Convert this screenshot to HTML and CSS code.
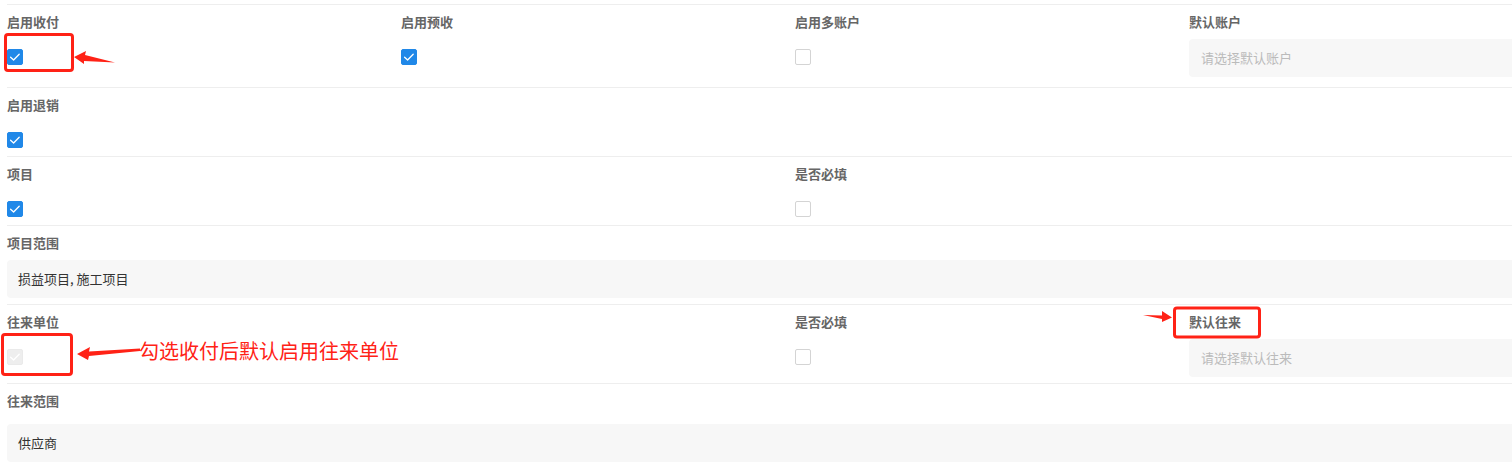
FILE: index.html
```html
<!DOCTYPE html>
<html lang="zh">
<head>
<meta charset="utf-8">
<title>收付设置</title>
<link rel="stylesheet" href="styles.css">
</head>
<body>
<div class="form">
  <div class="row row-tall">
    <div class="item">
      <div class="label">启用收付</div>
      <div class="ctrl"><span class="cb cb-on"><svg class="tick" viewBox="0 0 16 16"><path d="M3.6 8.2 L6.6 11 L12.2 5.2"/></svg></span></div>
    </div>
    <div class="item">
      <div class="label">启用预收</div>
      <div class="ctrl"><span class="cb cb-on"><svg class="tick" viewBox="0 0 16 16"><path d="M3.6 8.2 L6.6 11 L12.2 5.2"/></svg></span></div>
    </div>
    <div class="item">
      <div class="label">启用多账户</div>
      <div class="ctrl"><span class="cb"></span></div>
    </div>
    <div class="item">
      <div class="label">默认账户</div>
      <div class="ctrl"><div class="input placeholder">请选择默认账户</div></div>
    </div>
  </div>

  <div class="row row-cb">
    <div class="item">
      <div class="label">启用退销</div>
      <div class="ctrl"><span class="cb cb-on"><svg class="tick" viewBox="0 0 16 16"><path d="M3.6 8.2 L6.6 11 L12.2 5.2"/></svg></span></div>
    </div>
  </div>

  <div class="row row-cb">
    <div class="item">
      <div class="label">项目</div>
      <div class="ctrl"><span class="cb cb-on"><svg class="tick" viewBox="0 0 16 16"><path d="M3.6 8.2 L6.6 11 L12.2 5.2"/></svg></span></div>
    </div>
    <div class="item"></div>
    <div class="item">
      <div class="label">是否必填</div>
      <div class="ctrl"><span class="cb"></span></div>
    </div>
  </div>

  <div class="row row-wide">
    <div class="item item-full">
      <div class="label">项目范围</div>
      <div class="ctrl"><div class="input value">损益项目, 施工项目</div></div>
    </div>
  </div>

  <div class="row row-wide">
    <div class="item">
      <div class="label">往来单位</div>
      <div class="ctrl"><span class="cb cb-disabled"><svg class="tick" viewBox="0 0 16 16"><path d="M3.6 8.2 L6.6 11 L12.2 5.2"/></svg></span></div>
    </div>
    <div class="item"></div>
    <div class="item">
      <div class="label">是否必填</div>
      <div class="ctrl"><span class="cb"></span></div>
    </div>
    <div class="item">
      <div class="label">默认往来</div>
      <div class="ctrl"><div class="input placeholder">请选择默认往来</div></div>
    </div>
  </div>

  <div class="row">
    <div class="item item-full">
      <div class="label">往来范围</div>
      <div class="ctrl ctrl-low"><div class="input value">供应商</div></div>
    </div>
  </div>
</div>

<svg class="annot" viewBox="0 0 1512 469" width="1512" height="469">
  <rect x="5.5" y="34.5" width="67" height="36" rx="2.5" ry="2.5" fill="none" stroke="#ff2216" stroke-width="3"/>
  <polygon points="74,57 86,51 85,55 115,62.5 84,61 84,64" fill="#ff2216"/>
  <rect x="2.5" y="334.5" width="69" height="40" rx="2.5" ry="2.5" fill="none" stroke="#ff2216" stroke-width="3"/>
  <polygon points="77,354 90,347 89,351.5 140,348.5 140,351 89,356 88,360" fill="#ff2216"/>
  <rect x="1174.5" y="308" width="85" height="29" rx="2.5" ry="2.5" fill="none" stroke="#ff2216" stroke-width="3"/>
  <polygon points="1143,315 1162,315.5 1162,311 1172,317.5 1162,322 1162,319" fill="#ff2216"/>
</svg>
<div class="note">勾选收付后默认启用往来单位</div>
</body>
</html>
```

FILE: styles.css
```css
html, body {
  margin: 0;
  padding: 0;
  overflow: hidden;
  background: #ffffff;
}

body {
  width: 1512px;
  height: 469px;
  position: relative;
  font-family: "Noto Sans CJK SC", "Noto Sans", sans-serif;
  font-size: 13px;
}

.form {
  padding-top: 4px;
  margin-left: 7px;
  width: 1600px;
}

.row {
  display: flex;
  align-items: flex-start;
  border-top: 1px solid #eeeeee;
}

.row-tall {
  padding-bottom: 10px;
}

.row-cb {
  padding-bottom: 8px;
}

.row-wide {
  padding-bottom: 6px;
}

.item {
  width: 394px;
  flex: none;
}

.item-full {
  flex: 1;
}

.label {
  padding-top: 6px;
  line-height: 22px;
  font-weight: bold;
  color: #666666;
}

.ctrl {
  padding-top: 6px;
}

.ctrl-low {
  padding-top: 12px;
}

.cb {
  margin-top: 10px;
  width: 16px;
  height: 16px;
  box-sizing: border-box;
  border-radius: 2px;
  border: 1px solid #d4d4d4;
  background: #ffffff;
  display: flex;
  align-items: center;
  justify-content: center;
}

.cb-on {
  background: #2088e8;
  border-color: #2088e8;
}

.cb-disabled {
  background: #eeeeee;
  border-color: #eaeaea;
}

.tick {
  width: 16px;
  height: 16px;
  flex: none;
}

.tick path {
  fill: none;
  stroke: #ffffff;
  stroke-width: 1.3;
  stroke-linecap: round;
  stroke-linejoin: round;
}

.input {
  height: 38px;
  box-sizing: border-box;
  background: #f7f7f7;
  border-radius: 4px;
  padding-left: 12px;
  line-height: 38px;
  white-space: nowrap;
}

.placeholder {
  color: #bbbbbb;
}

.value {
  padding-left: 11px;
  color: #333333;
}

.annot {
  position: absolute;
  top: 0;
  left: 0;
  pointer-events: none;
}

.note {
  position: absolute;
  left: 139px;
  top: 340px;
  font-size: 20px;
  line-height: 22px;
  color: #ff2216;
  white-space: nowrap;
}
```
